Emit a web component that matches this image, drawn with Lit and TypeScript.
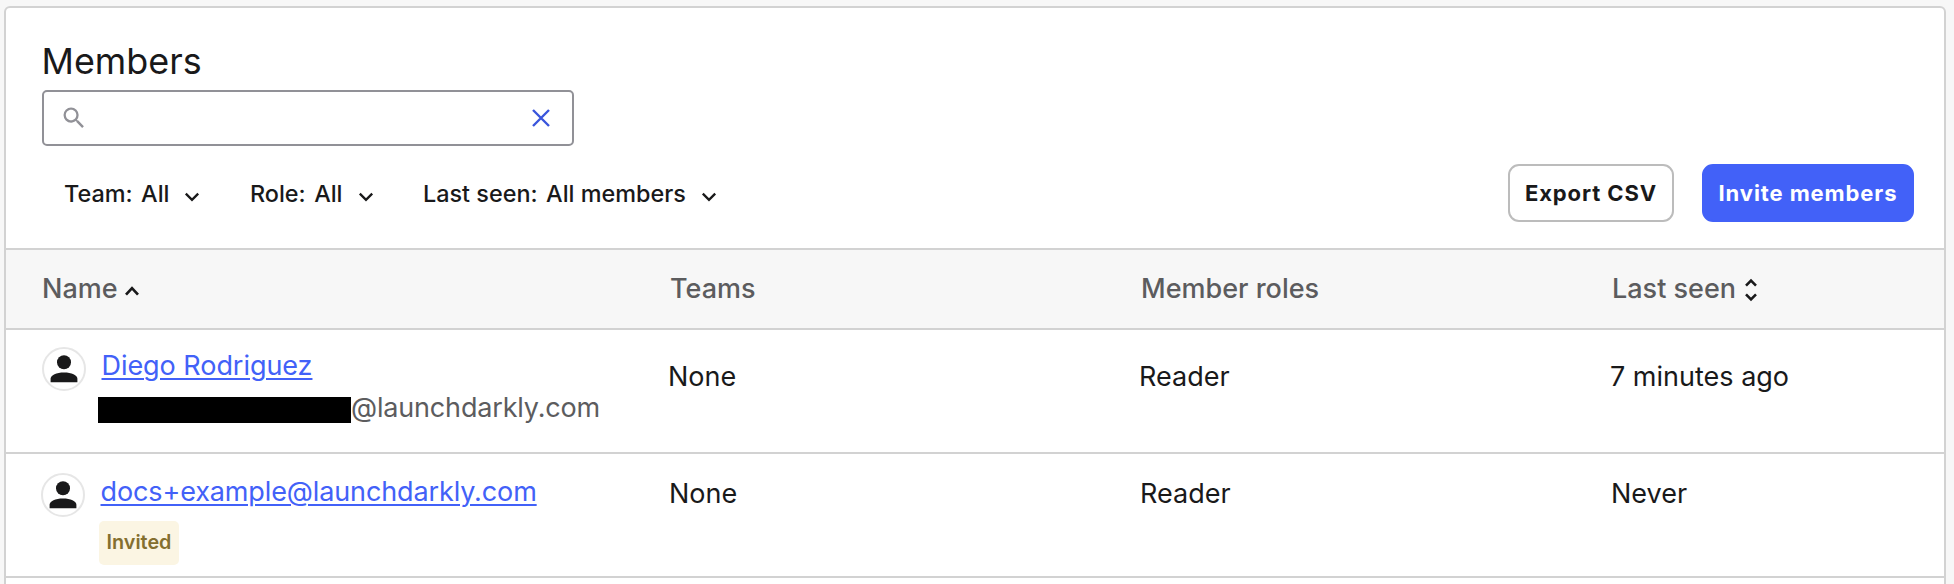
import { LitElement, html, css, svg, nothing } from "lit";
import { customElement, property } from "lit/decorators.js";

const chevronDown = svg`<svg class="chev" width="16" height="10" viewBox="0 0 16 10"><path d="M1.8 1.6 8 7.8l6.2-6.2" fill="none" stroke="#19191a" stroke-width="2.3"/></svg>`;

@customElement("member-avatar")
class MemberAvatar extends LitElement {
  static styles = css`
    :host {
      display: block;
      flex: none;
      box-sizing: border-box;
      width: 44px;
      height: 44px;
      border: 2px solid #e6e6e6;
      border-radius: 50%;
      background: #fff;
    }
    svg { display: block; }
  `;
  render() {
    return html`<svg width="40" height="40" viewBox="0 0 40 40" fill="#19191a">
      <circle cx="20" cy="13.2" r="7" />
      <path d="M6.6 33.2v-3.4C6.6 26 12.5 23.4 20 23.4S33.4 26 33.4 29.8v3.4z" />
    </svg>`;
  }
}

@customElement("filter-menu")
class FilterMenu extends LitElement {
  @property() label = "";
  @property() value = "";
  static styles = css`
    :host {
      display: flex;
      align-items: center;
      padding-top: 1px;
      font-size: 23.4px;
      line-height: 29px;
      font-weight: 500;
      white-space: nowrap;
    }
    .value { margin-left: 8.5px; }
    .chev { margin: 6px 0 0 15px; }
  `;
  render() {
    return html`<span class="label">${this.label}:</span><span class="value">${this.value}</span>${chevronDown}`;
  }
}

interface Member {
  name: string;
  redacted?: boolean;
  domain?: string;
  invited?: boolean;
  teams: string;
  role: string;
  seen: string;
}

const members: Member[] = [
  { name: "Diego Rodriguez", redacted: true, domain: "@launchdarkly.com", teams: "None", role: "Reader", seen: "7 minutes ago" },
  { name: "docs+example@launchdarkly.com", invited: true, teams: "None", role: "Reader", seen: "Never" },
];

@customElement("app-root")
class AppRoot extends LitElement {
  static styles = css`
    :host {
      display: block;
      box-sizing: border-box;
      height: 584px;
      overflow: hidden;
      padding: 6px 8px 0 4px;
      background: #f7f7f7;
      color: #19191a;
      font-family: Inter, sans-serif;
    }
    .card {
      box-sizing: border-box;
      height: 620px;
      border: 2px solid #d2d2d2;
      border-radius: 6px;
      background: #fff;
      overflow: hidden;
    }
    .top { padding: 31px 30px 26px 36px; }
    h1 { margin: 0 0 7px -0.5px; font-size: 35.9px; line-height: 44px; font-weight: 400; }
    .search {
      box-sizing: border-box;
      display: flex;
      align-items: center;
      justify-content: space-between;
      width: 532px;
      height: 56px;
      padding: 0 21px 0 16px;
      border: 2px solid #919197;
      border-radius: 5px;
    }
    .search svg { display: block; }
    .toolbar { display: flex; align-items: center; height: 58px; margin-top: 18px; }
    .filters { display: flex; gap: 49.5px; padding-left: 22px; }
    .actions { display: flex; gap: 28px; margin-left: auto; }
    button {
      box-sizing: border-box;
      height: 58px;
      padding: 0 0 1px;
      border: 2px solid #bcbcbc;
      border-radius: 11px;
      background: #fff;
      color: #19191a;
      font: 700 22px/28px Inter, sans-serif;
      letter-spacing: 0.9px;
      text-align: center;
      white-space: nowrap;
    }
    .export { width: 166px; }
    .invite { width: 212px; border-color: #4261f8; background: #4261f8; color: #fff; }
    .row {
      display: grid;
      grid-template-columns: 628px 471px 471px 1fr;
      box-sizing: border-box;
      height: 124px;
      border-bottom: 2px solid #d2d2d2;
      padding-left: 36px;
      font-size: 27px;
      line-height: 34px;
      white-space: nowrap;
    }
    .head {
      height: 82px;
      border-top: 2px solid #d2d2d2;
      align-items: center;
      background: #f7f7f7;
      color: #5c5c5e;
      font-weight: 500;
      padding-bottom: 1px;
    }
    .head > div { display: flex; align-items: center; }
    .up { margin: 4px 0 0 6px; }
    .sort { margin: 3px 0 0 9px; }
    .who { display: flex; padding-top: 17px; gap: 12px; }
    .info { display: flex; flex-direction: column; align-items: flex-start; }
    .name {
      color: #4261f8;
      margin: 2px 0 0 3.5px;
      text-decoration: underline;
      text-decoration-thickness: 2px;
      text-underline-offset: 3px;
    }
    .mail { display: flex; align-items: center; margin-top: 8px; color: #5c5c5e; letter-spacing: -0.17px; }
    .bar { width: 253px; height: 26px; margin-top: 4px; background: #000; }
    .cell { padding-top: 30px; }
    .active .cell { margin-left: -2px; }
    .active .name { letter-spacing: -0.05px; }
    .pending .who { padding-top: 19px; margin-left: -1px; }
    .pending .name { letter-spacing: -0.12px; }
    .pending .cell { padding-top: 23px; margin-left: -1px; }
    .badge {
      margin: 12px 0 0 2px;
      width: 80px;
      height: 44px;
      border-radius: 5px;
      background: #fbf5e3;
      color: #846f2f;
      font-size: 19.8px;
      line-height: 42px;
      font-weight: 600;
      text-align: center;
    }
  `;

  render() {
    return html`<section class="card">
      <div class="top">
        <h1>Members</h1>
        <div class="search">
          <svg width="28" height="28" viewBox="0 0 24 24" fill="#919197"><path d="M15.5 14h-.79l-.28-.27A6.47 6.47 0 0 0 16 9.5 6.5 6.5 0 1 0 9.5 16c1.61 0 3.09-.59 4.23-1.57l.27.28v.79l5 4.99L20.49 19l-4.99-5zm-6 0C7.01 14 5 11.99 5 9.5S7.01 5 9.5 5 14 7.01 14 9.5 11.99 14 9.5 14z" /></svg>
          <svg width="20" height="20" viewBox="0 0 20 20"><path d="m2 2 16 16M18 2 2 18" fill="none" stroke="#3a55dc" stroke-width="2.4" /></svg>
        </div>
        <div class="toolbar">
          <div class="filters">
            <filter-menu label="Team" value="All"></filter-menu>
            <filter-menu label="Role" value="All"></filter-menu>
            <filter-menu label="Last seen" value="All members"></filter-menu>
          </div>
          <div class="actions">
            <button class="export">Export CSV</button>
            <button class="invite">Invite members</button>
          </div>
        </div>
      </div>
      <div class="row head">
        <div>Name<svg class="up" width="16" height="10" viewBox="0 0 16 10"><path d="M2 8.6 8 2.2l6 6.4" fill="none" stroke="#19191a" stroke-width="2.7" /></svg></div>
        <div>Teams</div>
        <div>Member roles</div>
        <div>Last seen<svg class="sort" width="12" height="24" viewBox="0 0 12 24"><path d="M1 7.6 6 2.6l5 5M1 16.4l5 5 5-5" fill="none" stroke="#19191a" stroke-width="2.6" /></svg></div>
      </div>
      ${members.map(
        (m) => html`<div class="row ${m.invited ? "pending" : "active"}">
          <div class="who">
            <member-avatar></member-avatar>
            <div class="info">
              <a class="name">${m.name}</a>
              ${m.redacted ? html`<div class="mail"><span class="bar"></span>${m.domain}</div>` : nothing}
              ${m.invited ? html`<span class="badge">Invited</span>` : nothing}
            </div>
          </div>
          <div class="cell">${m.teams}</div>
          <div class="cell">${m.role}</div>
          <div class="cell">${m.seen}</div>
        </div>`
      )}
    </section>`;
  }
}
